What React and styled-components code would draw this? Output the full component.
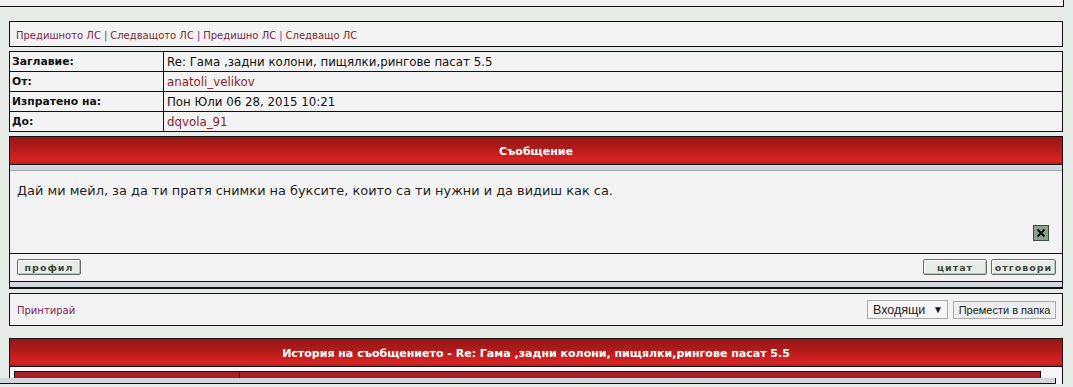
import React from "react";
import styled, { createGlobalStyle } from "styled-components";

const Global = createGlobalStyle`
  html, body { margin: 0; padding: 0; }
  body {
    background: #e8ece9;
    height: 387px;
    overflow: hidden;
    font-family: Tahoma, "DejaVu Sans", Verdana, sans-serif;
    color: #222;
  }
`;

const Page = styled.div`
  position: relative;
  height: 387px;
  overflow: hidden;
`;

const TopBox = styled.div`
  width: 1064px;
  height: 7px;
  box-sizing: border-box;
  background: #f2f2f2;
  border-right: 1px solid #111;
  border-bottom: 1px solid #111;
`;

const Content = styled.div`
  width: 1054px;
  margin-left: 9px;
  display: flex;
  flex-direction: column;
`;

const NavBox = styled.div`
  margin-top: 14px;
  height: 26px;
  box-sizing: border-box;
  border: 1px solid #111;
  background: #f3f3f3;
  display: flex;
  align-items: center;
  padding: 2px 6px 0;
  font-size: 10px;
`;

const NavLink = styled.span`
  color: ${(p) => (p.$visited ? "#7b2350" : "#7c2a2a")};
`;

const Sep = styled.span`
  color: #44448a;
  margin: 0 3px;
`;

const InfoTable = styled.div`
  margin-top: 4px;
  border: 1px solid #111;
  border-bottom: none;
  background: #f3f3f3;
  display: grid;
  grid-template-columns: 154px 1fr;
`;

const Cell = styled.div`
  height: 19px;
  border-bottom: 1px solid #111;
  display: flex;
  align-items: center;
  padding-left: ${(p) => (p.$label ? "2px" : "3px")};
  border-right: ${(p) => (p.$label ? "1px solid #111" : "none")};
  font-size: ${(p) => (p.$label ? "10.8px" : "11.8px")};
  font-weight: ${(p) => (p.$label ? "bold" : "normal")};
  color: ${(p) => p.$color || "#111"};
`;

const Panel = styled.div`
  margin-top: ${(p) => p.$mt || 0}px;
  border: 1px solid #111;
  background: #f3f3f3;
  display: flex;
  flex-direction: column;
`;

const RedBar = styled.div`
  height: 28px;
  box-sizing: border-box;
  background: linear-gradient(
    #961616 0%,
    #b01b1b 40%,
    #cb2020 70%,
    #d52424 88%,
    #b51c1c 100%
  );
  border-bottom: 1px solid #111;
  color: #fff;
  font-weight: bold;
  font-size: 11px;
  display: flex;
  align-items: center;
  justify-content: center;
  padding-top: 1px;
`;

const GrayStrip = styled.div`
  height: 5px;
  background: #d3d7dc;
  border-bottom: 1px solid ${(p) => p.$line || "#a4a8ad"};
`;

const Body = styled.div`
  height: 83px;
  box-sizing: border-box;
  border-bottom: 1px solid #111;
  padding: 12px 13px 0 7px;
  display: flex;
  flex-direction: column;
  font-size: 12.9px;
  color: #1e1e1e;
`;

const CloseRow = styled.div`
  margin-top: auto;
  margin-bottom: 12px;
  display: flex;
  justify-content: flex-end;
`;

const CloseBox = styled.div`
  width: 14px;
  height: 14px;
  background: #8aa091;
  border: 1px solid #3c4a40;
  display: flex;
  align-items: center;
  justify-content: center;
`;

const ButtonRow = styled.div`
  height: 28px;
  box-sizing: border-box;
  border-bottom: 1px solid #111;
  padding: 5px 6px 0 7px;
  display: flex;
  gap: 4px;
`;

const Spacer = styled.div`
  flex: 1;
`;

const PostButton = styled.div`
  width: ${(p) => p.$w}px;
  height: 16px;
  box-sizing: border-box;
  border: 1px solid #5f6f64;
  border-radius: 2px;
  box-shadow: inset 1px 1px 0 #fff, inset -1px -1px 0 #b9c2bb;
  background: #e7ece7;
  color: #3b4640;
  font-family: "DejaVu Sans", Verdana, sans-serif;
  font-weight: bold;
  font-size: 9.5px;
  letter-spacing: 1px;
  display: flex;
  align-items: center;
  justify-content: center;
`;

const PrintBox = styled.div`
  margin-top: 4px;
  height: 33px;
  box-sizing: border-box;
  border: 1px solid #111;
  background: #f3f3f3;
  display: flex;
  align-items: center;
  padding: 0 6px 0 7px;
  font-size: 10px;
`;

const PrintLink = styled.span`
  color: #7b2350;
  margin-top: 1px;
`;

const Select = styled.div`
  width: 81px;
  height: 19px;
  box-sizing: border-box;
  border: 1px solid #a9a9a9;
  background: #f6f6f6;
  font-family: "Liberation Sans", Arial, sans-serif;
  font-size: 12.5px;
  color: #222;
  display: flex;
  align-items: center;
  padding: 0 4px 0 5px;
  justify-content: space-between;
`;

const Arrow = styled.span`
  font-size: 10px;
  color: #111;
`;

const MoveButton = styled.div`
  margin-left: 5px;
  width: 103px;
  height: 18px;
  box-sizing: border-box;
  border: 1px solid #a9a9a9;
  background: #eeeeee;
  font-family: "Liberation Sans", Arial, sans-serif;
  font-size: 11px;
  color: #222;
  display: flex;
  align-items: center;
  justify-content: center;
`;

const HistoryPanel = styled.div`
  margin-top: 12px;
  border: 1px solid #111;
  background: #f6f6f6;
  height: 60px;
`;

const InnerTable = styled.div`
  margin: 4px 21px 0 4px;
  border: 1px solid #111;
  display: grid;
  grid-template-columns: 225px 1fr;
  height: 20px;
  background: #a8202a;
`;

const InnerCell = styled.div`
  border-right: ${(p) => (p.$first ? "1px solid #111" : "none")};
`;

const BottomStrip = styled.div`
  position: absolute;
  left: 0;
  top: 378px;
  width: 1055px;
  height: 5px;
  background: #d3d7dc;
  border-bottom: 1px solid #111;
  border-right: 1px solid #111;
`;

const BottomFill = styled.div`
  position: absolute;
  left: 0;
  top: 384px;
  width: 1073px;
  height: 3px;
  background: #e8ece9;
`;

export default function App() {
  return (
    <Page>
      <Global />
      <TopBox />
      <Content>
        <NavBox>
          <NavLink $visited>Предишното ЛС</NavLink>
          <Sep>|</Sep>
          <NavLink>Следващото ЛС</NavLink>
          <Sep>|</Sep>
          <NavLink $visited>Предишно ЛС</NavLink>
          <Sep>|</Sep>
          <NavLink>Следващо ЛС</NavLink>
        </NavBox>

        <InfoTable>
          <Cell $label>Заглавие:</Cell>
          <Cell>Re: Гама ,задни колони, пищялки,рингове пасат 5.5</Cell>
          <Cell $label>От:</Cell>
          <Cell $color="#8a1f2a">anatoli_velikov</Cell>
          <Cell $label>Изпратено на:</Cell>
          <Cell>Пон Юли 06 28, 2015 10:21</Cell>
          <Cell $label>До:</Cell>
          <Cell $color="#8a1f2a">dqvola_91</Cell>
        </InfoTable>

        <Panel $mt={4}>
          <RedBar>Съобщение</RedBar>
          <GrayStrip />
          <Body>
            Дай ми мейл, за да ти пратя снимки на буксите, които са ти нужни и да видиш как са.
            <CloseRow>
              <CloseBox>
                <svg width="10" height="10" viewBox="0 0 10 10">
                  <path d="M1.5 1.5 L8.5 8.5 M8.5 1.5 L1.5 8.5" stroke="#111" strokeWidth="2" />
                </svg>
              </CloseBox>
            </CloseRow>
          </Body>
          <ButtonRow>
            <PostButton $w={64}>профил</PostButton>
            <Spacer />
            <PostButton $w={64}>цитат</PostButton>
            <PostButton $w={65}>отговори</PostButton>
          </ButtonRow>
          <GrayStrip $line="#111" />
        </Panel>

        <PrintBox>
          <PrintLink>Принтирай</PrintLink>
          <Spacer />
          <Select>
            Входящи <Arrow>▼</Arrow>
          </Select>
          <MoveButton>Премести в папка</MoveButton>
        </PrintBox>

        <HistoryPanel>
          <RedBar>История на съобщението - Re: Гама ,задни колони, пищялки,рингове пасат 5.5</RedBar>
          <InnerTable>
            <InnerCell $first />
            <InnerCell />
          </InnerTable>
        </HistoryPanel>
      </Content>
      <BottomStrip />
      <BottomFill />
    </Page>
  );
}
